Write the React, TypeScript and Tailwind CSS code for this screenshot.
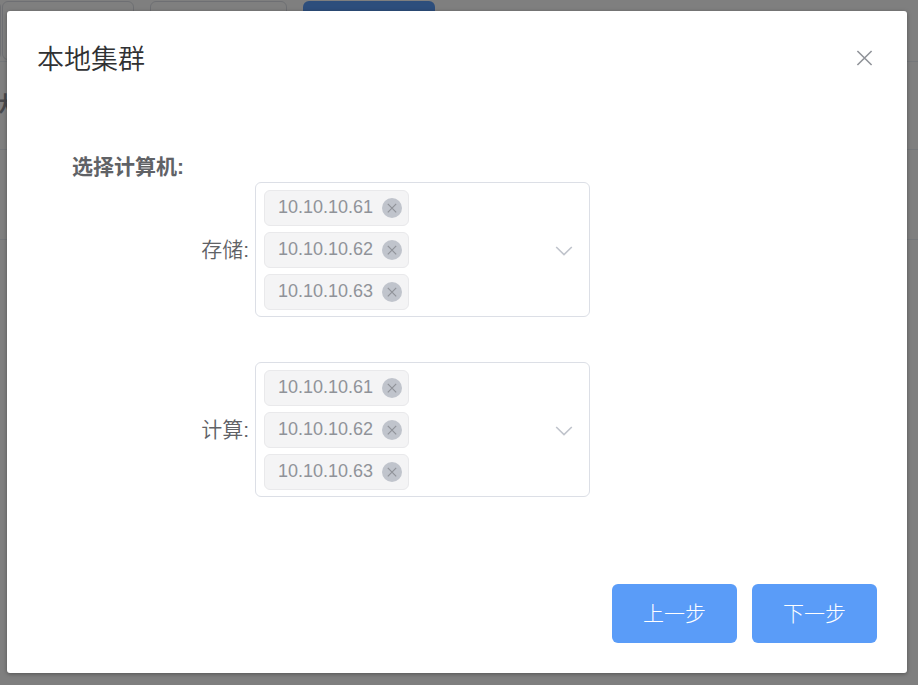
import { useState } from "react";

const machines = ["10.10.10.61", "10.10.10.62", "10.10.10.63"];

function MachineSelect({ id, label }: { id: string; label: string }) {
  const [selected, setSelected] = useState(machines);

  return (
    <div className="flex items-center">
      <label
        htmlFor={id}
        className="w-[211px] shrink-0 pr-[6px] text-right text-[21px] leading-8 font-[350]"
      >
        {label}:
      </label>
      <div className="flex min-h-[60px] w-full max-w-[335px] items-center rounded-md border border-[#dcdfe6] pt-[7px] pr-4 pb-[6px] pl-2">
        <ul className="flex shrink-0 flex-col gap-[6px]">
          {selected.map((ip) => (
            <li
              key={ip}
              className="flex h-9 items-center gap-[9px] rounded-md border border-[#e9e9eb] bg-[#f4f4f5] pr-[6px] pl-[13px] text-[18px] text-[#909399]"
            >
              <span className="pb-[2px] leading-6">{ip}</span>
              <button
                type="button"
                aria-label={`移除 ${ip}`}
                className="flex size-5 items-center justify-center rounded-full bg-[#c0c4cc]"
                onClick={() => setSelected(selected.filter((s) => s !== ip))}
              >
                <svg viewBox="0 0 10 10" className="size-[10px]" fill="none" stroke="#909399" strokeWidth="1.2">
                  <path d="M.8.9l8.4 8.4M9.2.9L.8 9.3" />
                </svg>
              </button>
            </li>
          ))}
        </ul>
        <select
          id={id}
          value=""
          onChange={(e) => setSelected([...selected, e.target.value])}
          className="h-10 min-w-0 flex-1 appearance-none bg-transparent outline-none"
        >
          <option value="" />
          {machines
            .filter((ip) => !selected.includes(ip))
            .map((ip) => (
              <option key={ip} value={ip}>
                {ip}
              </option>
            ))}
        </select>
        <svg
          viewBox="0 0 18 18"
          className="pointer-events-none size-[18px] shrink-0"
          fill="none"
          stroke="#c0c4cc"
          strokeWidth="1.6"
        >
          <path d="M1.2 6l7.8 7.6L16.8 6" />
        </svg>
      </div>
    </div>
  );
}

function PageBehind() {
  return (
    <div aria-hidden="true" className="min-h-screen overflow-hidden bg-white">
      <div className="flex h-[62px] gap-4 border-b border-[#ebeef5] pt-px">
        <div className="-ml-[131px] flex shrink-0 gap-px">
          <div className="h-[59px] w-[132px] rounded-md border border-[#dcdfe6]" />
          <div className="h-[59px] w-[132px] rounded-md border border-[#dcdfe6]" />
        </div>
        <div className="h-[59px] w-[137px] rounded-md border border-[#dcdfe6]" />
        <div className="h-[59px] w-[132px] rounded-md bg-[#5a9cf8]" />
      </div>
      <div className="flex h-[88px] items-center border-b border-[#ebeef5] pb-1 text-[21px] font-bold text-[#909399]">
        <span className="-ml-2">状态</span>
      </div>
      <div className="h-[90px] border-b border-[#ebeef5]" />
    </div>
  );
}

export default function App() {
  return (
    <div className="relative font-['Liberation_Sans','Noto_Sans_CJK_SC',sans-serif] text-[#606266]">
      <PageBehind />
      <div className="absolute inset-0 bg-black/50 pt-[11px] pr-[11px] pb-3 pl-[7px]">
        <div
          role="dialog"
          aria-labelledby="dialog-title"
          className="flex min-h-full flex-col rounded-[3px] bg-white p-[30px] shadow-[0_1px_4px_rgba(0,0,0,0.35)]"
        >
          <header className="flex items-start justify-between">
            <h2 id="dialog-title" className="text-[27px] leading-[38px] font-[350] text-[#303133]">
              本地集群
            </h2>
            <button type="button" aria-label="关闭" className="mt-[5px] size-6 text-[#909399]">
              <svg viewBox="0 0 24 24" className="size-6" fill="none" stroke="currentColor" strokeWidth="1.6">
                <path d="M4.4 5l14.2 14M18.6 5L4.4 19" />
              </svg>
            </button>
          </header>

          <main className="flex-1 pt-[73px] pl-[35px]">
            <h3 className="text-[21px] leading-[30px] font-bold">选择计算机:</h3>
            <div className="-ml-7 flex flex-col gap-[45px]">
              <MachineSelect id="storage" label="存储" />
              <MachineSelect id="compute" label="计算" />
            </div>
          </main>

          <footer className="flex justify-end gap-[15px] text-[21px] font-light text-white">
            <button type="button" className="h-[59px] w-[125px] rounded-md bg-[#5a9cf8]">
              上一步
            </button>
            <button type="button" className="h-[59px] w-[125px] rounded-md bg-[#5a9cf8]">
              下一步
            </button>
          </footer>
        </div>
      </div>
    </div>
  );
}
